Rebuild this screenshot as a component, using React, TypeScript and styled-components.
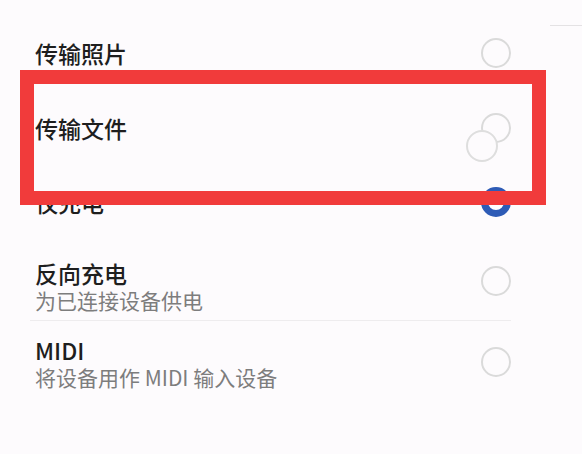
import React from 'react';
import styled, { createGlobalStyle } from 'styled-components';

const GlobalStyle = createGlobalStyle`
    html, body {
        margin: 0;
        padding: 0;
        background: #fdfbfd;
    }
    body {
        font-family: "Noto Sans CJK SC", "Noto Sans", sans-serif;
    }
`;

interface Option {
    title: string;
    sub?: string;
    selected?: boolean;
    ghost?: boolean;
    h?: number;
    pt?: number;
    pb?: number;
    offset?: number;
    divider?: boolean;
};

const options: Option[] = [
    { title: '传输照片', h: 54 },
    { title: '传输文件', h: 96, ghost: true },
    { title: '仅充电', h: 52, selected: true },
    { title: '反向充电', sub: '为已连接设备供电', pt: 31, pb: 7, offset: 7, divider: true },
    { title: 'MIDI', sub: '将设备用作 MIDI 输入设备', pt: 15, pb: 0, offset: 11 },
];

function App() {
    return (
        <>
            <GlobalStyle />
            <Page>
                <Header>
                    <TopRule />
                </Header>
                {options.map((o) => {
                    return (
                        <React.Fragment key={o.title}>
                            <Row $h={o.h} $pt={o.pt} $pb={o.pb} $twoLine={!!o.sub}>
                                <Texts>
                                    <Title>{o.title}</Title>
                                    {o.sub && <Sub>{o.sub}</Sub>}
                                </Texts>
                                <RadioWrap $offset={o.offset}>
                                    <Radio $selected={o.selected} />
                                    {o.ghost && <GhostRadio />}
                                </RadioWrap>
                            </Row>
                            {o.divider && <Divider />}
                        </React.Fragment>
                    );
                })}
                <Highlight />
            </Page>
        </>
    );
}

const Page = styled.div`
    position: relative;
    width: 582px;
    height: 454px;
    box-sizing: border-box;
    padding: 0 71px 0 35px;
    background: #fdfbfd;
    overflow: hidden;
`;

const Header = styled.div`
    height: 26px;
    display: flex;
    justify-content: flex-end;
    align-items: flex-start;
    margin-right: -71px;
`;

const TopRule = styled.div`
    width: 32px;
    height: 1px;
    margin-top: 25px;
    background: #e4e2e4;
`;

const Row = styled.div<{ $h?: number; $pt?: number; $pb?: number; $twoLine?: boolean }>`
    display: flex;
    justify-content: space-between;
    align-items: ${(p) => (p.$twoLine ? 'flex-start' : 'center')};
    height: ${(p) => (p.$h ? `${p.$h}px` : 'auto')};
    padding-top: ${(p) => p.$pt || 0}px;
    padding-bottom: ${(p) => p.$pb || 0}px;
`;

const Texts = styled.div`
    display: flex;
    flex-direction: column;
`;

const Title = styled.div`
    font-size: 23px;
    line-height: 28px;
    font-weight: 500;
    color: #1e1e1e;
`;

const Sub = styled.div`
    font-size: 21px;
    line-height: 26px;
    color: #7d7d7d;
`;

const RadioWrap = styled.div<{ $offset?: number }>`
    position: relative;
    width: 30px;
    height: 30px;
    margin-top: ${(p) => p.$offset || 0}px;
`;

const Radio = styled.div<{ $selected?: boolean }>`
    width: 30px;
    height: 30px;
    box-sizing: border-box;
    border-radius: 50%;
    border: ${(p) => (p.$selected ? '7px solid #2e5bb6' : '2px solid #dadada')};
    background: ${(p) => (p.$selected ? '#ffffff' : 'transparent')};
`;

const GhostRadio = styled.div`
    position: absolute;
    left: -15px;
    top: 17px;
    width: 32px;
    height: 32px;
    box-sizing: border-box;
    border-radius: 50%;
    border: 2px solid #dedede;
    background: #fdfbfd;
`;

const Divider = styled.div`
    height: 1px;
    margin-left: -5px;
    background: #eeecee;
`;

const Highlight = styled.div`
    position: absolute;
    left: 20px;
    top: 70px;
    width: 526px;
    height: 135px;
    box-sizing: border-box;
    border: 14px solid #f13b3b;
`;

export default App;
